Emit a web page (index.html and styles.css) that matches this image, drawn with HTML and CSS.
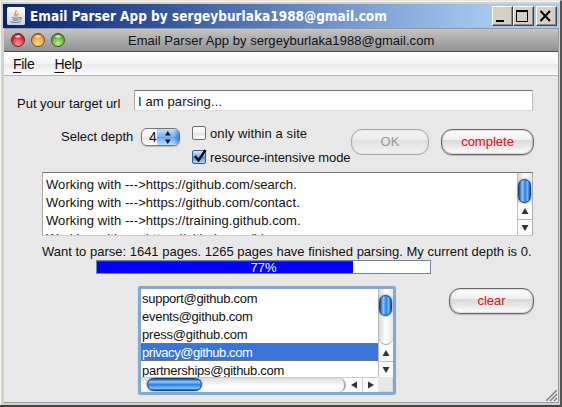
FILE: index.html
```html
<!DOCTYPE html>
<html lang="en">
<head>
<meta charset="utf-8">
<title>Email Parser App</title>
<link rel="stylesheet" href="styles.css">
</head>
<body>
<div class="window">
  <header class="titlebar">
    <svg class="java" viewBox="0 0 18 18" width="18" height="18">
      <defs><linearGradient id="jbg" x1="0" y1="0" x2="0" y2="1"><stop offset="0" stop-color="#fff"/><stop offset="1" stop-color="#cfcfd2"/></linearGradient></defs>
      <rect width="18" height="18" rx="1.5" fill="url(#jbg)"/>
      <path d="M8.6 9.6C5.8 7.4 10.2 6 8.8 3.2M10.3 9.4c-1.6-1.3.3-2 1-3" fill="none" stroke="#ec8a2c" stroke-width="1.3"/>
      <path d="M5 10.600c2.300.8 5.200.8 7.400 0M5.800 12.700c1.900.6 4 .6 5.700 0M3.800 14.800c3 1.100 8.200.9 10-.4M12.700 10.600c2.100-.5 2.300 1.500-.3 2.200" fill="none" stroke="#5d7d9c" stroke-width="1.100"/>
    </svg>
    <span class="caption">Email Parser App by sergeyburlaka1988@gmail.com</span>
    <div class="controls">
      <span class="ctl"><svg viewBox="0 0 20 20" width="20" height="20"><path d="M4 15h8" stroke="#000" stroke-width="2"/></svg></span>
      <span class="ctl"><svg viewBox="0 0 20 20" width="20" height="20"><path d="M3.500 5v10.500h11V5" fill="none" stroke="#000"/><path d="M3 5h12" stroke="#000" stroke-width="2"/></svg></span>
      <span class="ctl close"><svg viewBox="0 0 20 20" width="20" height="20"><path d="M4.500 5l9.500 10M14 5L4.500 15" stroke="#000" stroke-width="2"/></svg></span>
    </div>
  </header>
  <main class="frame">
    <div class="macbar">
      <i class="light red"></i><i class="light amber"></i><i class="light green"></i>
      <span class="mactitle">Email Parser App by sergeyburlaka1988@gmail.com</span>
    </div>
    <nav class="menu"><span class="file"><u>F</u>ile</span><span class="help"><u>H</u>elp</span></nav>
    <section class="url-row">
      <label>Put your target url</label>
      <div class="field">I am parsing...</div>
    </section>
    <section class="options">
      <span class="depth">Select depth</span>
      <div class="spinner"><b>4</b><i><svg viewBox="0 0 22 17" width="22" height="17"><path d="M8 6.500L10.800 2l2.800 4.500zM8 10.500h5.600L10.800 15z" fill="#061226"/></svg></i></div>
      <div class="checks">
        <div class="check"><i class="box"></i><span class="site">only within a site</span></div>
        <div class="check"><i class="box on"><svg viewBox="0 0 16 16" width="16" height="16"><path d="M3 7l3.500 4.500L13.500 1" fill="none" stroke="#000" stroke-width="2.300"/></svg></i><span class="mode">resource-intensive mode</span></div>
      </div>
      <div class="button ok">OK</div>
      <div class="button complete">complete</div>
    </section>
    <section class="log">
      <div class="lines">
        <p class="l1">Working with ---&gt;https://github.com/search.</p>
        <p class="l2">Working with ---&gt;https://github.com/contact.</p>
        <p class="l3">Working with ---&gt;https://training.github.com.</p>
        <p class="l4">Working with ---&gt;https://github.com/blog.</p>
      </div>
      <div class="vscroll"><div class="track"><i class="thumb"></i></div><b class="arrow"><svg viewBox="0 0 14 16" width="14" height="16"><path d="M3.500 11L7 5l3.500 6z" fill="#333"/></svg></b><b class="arrow line"><svg viewBox="0 0 14 16" width="14" height="16"><path d="M3.500 5L7 11l3.500-6z" fill="#333"/></svg></b></div>
    </section>
    <p class="status">Want to parse: 1641 pages. 1265 pages have finished parsing. My current depth is 0.</p>
    <div class="progress"><div class="fill"></div><span>77%</span></div>
    <section class="bottom">
      <div class="list">
        <ul>
          <li class="r1">support@github.com</li>
          <li class="r2">events@github.com</li>
          <li class="r3">press@github.com</li>
          <li class="r4 selected">privacy@github.com</li>
          <li class="r5">partnerships@github.com</li>
        </ul>
        <div class="vscroll"><div class="track cap"><i class="thumb"></i></div><b class="arrow"><svg viewBox="0 0 14 16" width="14" height="16"><path d="M3.500 11L7 5l3.500 6z" fill="#333"/></svg></b><b class="arrow line"><svg viewBox="0 0 14 16" width="14" height="16"><path d="M3.500 5L7 11l3.500-6z" fill="#333"/></svg></b></div>
        <div class="hscroll"><div class="htrack"><i class="hthumb"></i></div><b><svg viewBox="0 0 16 14" width="16" height="14"><path d="M11 3.500L5 7l6 3.500z" fill="#333"/></svg></b><b class="sep"><svg viewBox="0 0 16 14" width="16" height="14"><path d="M5 3.500L11 7l-6 3.500z" fill="#333"/></svg></b></div>
      </div>
      <div class="button clear">clear</div>
    </section>
    <svg class="grip" viewBox="0 0 11 11" width="11" height="11"><path d="M0 11L11 0M4 11l7-7M8 11l3-3" stroke="#777" stroke-width="1.300"/></svg>
  </main>
</div>
</body>
</html>
```
FILE: styles.css
```css
* { box-sizing: border-box; }
body { margin: 0; width: 562px; height: 407px; overflow: hidden; background: #d5d2cb; font: 13px/18px "Liberation Sans", Arial, sans-serif; color: #111; }
p, ul { margin: 0; padding: 0; list-style: none; }
svg { display: block; }
i, b { font-style: normal; font-weight: normal; display: block; }
span, p, li, label { white-space: nowrap; }
.window { height: 407px; padding: 3px 1px 0 3px; border: solid; border-width: 1px 2px 2px 0; border-color: #e8e6e0 #555 #444 #ddd; box-shadow: inset 1px 1px #f4f3ef; }
.titlebar { display: flex; align-items: center; height: 24px; padding: 0 2px 0 4px; background: linear-gradient(90deg, #0a246a, #2e4f96 25%, #7395cc 60%, #a6caf0 88%); }
.caption { margin-left: 5px; color: #fff; font: bold 13.5px/20px "DejaVu Sans Condensed", "DejaVu Sans", sans-serif; }
.controls { display: flex; margin-left: auto; }
.ctl { width: 21px; height: 20px; background: #d4d0c8; border: 1px solid; border-color: #fff #404040 #404040 #fff; box-shadow: inset -1px -1px #929089; }
.ctl svg { margin: -1px; }
.close { margin-left: 2px; }
.frame { position: relative; height: 375px; border: solid #999; border-width: 1px 1px 1px 0; background: #e8e8e8; margin-left: 1px; }
.macbar { display: flex; align-items: center; height: 23px; padding-left: 7px; gap: 6px; background: linear-gradient(#c4c4c4, #929292); border-bottom: 1px solid #4c4c4c; }
.light { width: 14px; height: 14px; border-radius: 50%; border: 1px solid; }
.red { background: radial-gradient(ellipse 4px 2px at 50% 20%, #fff, transparent), radial-gradient(circle at 50% 80%, #ff9a94, #dc2634 60%, #8d1019); border-color: #6d2024; }
.amber { background: radial-gradient(ellipse 4px 2px at 50% 20%, #fff, transparent), radial-gradient(circle at 50% 80%, #ffe78a, #eb9b3b 60%, #9a5314); border-color: #7b4a20; }
.green { background: radial-gradient(ellipse 4px 2px at 50% 20%, #fff, transparent), radial-gradient(circle at 50% 80%, #c5f08a, #65ad35 60%, #2e6515); border-color: #315c20; }
.mactitle { margin: 2px 0 0 57px; letter-spacing: .04px; }
.menu { display: flex; height: 24px; padding: 3px 0 0 9px; font-size: 14px; letter-spacing: -.3px; background: linear-gradient(#fff, #f4f4f4 50%, #e9e9e9 52%, #fafafa); border-bottom: 1px solid #b4b4b4; }
.menu u { text-underline-offset: 3px; text-decoration-thickness: 1px; text-decoration-skip-ink: none; }
.help { margin-left: 20px; }
.url-row { display: flex; margin: 14px 0 0 13px; height: 21px; }
.url-row label { width: 117px; padding-top: 5px; }
.field { width: 399px; height: 21px; background: #fff; border: 1px solid; border-color: #777 #bbb #ddd #aaa; padding: 2px 3px; letter-spacing: .12px; }
.options { display: flex; margin: 15px 0 0 57px; height: 46px; align-items: flex-start; }
.depth { width: 80px; padding-top: 2px; }
.spinner { display: flex; width: 39px; height: 18px; margin-top: 2px; border: 1px solid #71777f; border-radius: 6px; background: linear-gradient(#fff, #f5f5f5 50%, #e5e5e5 52%, #fff); overflow: hidden; box-shadow: 0 1px 1px #bbb; }
.spinner b { width: 15px; padding-left: 7px; line-height: 17px; font-size: 14px; }
.spinner i { width: 22px; margin-left: auto; background: linear-gradient(90deg, transparent 75%, #2868c0aa), linear-gradient(#c4ddf7, #7bb2f0 50%, #65a6ec 52%, #b9e2ff); }
.checks { width: 159px; margin-left: 12px; }
.check { display: flex; height: 24px; }
.box { width: 14px; height: 14px; border: 1px solid #707070; border-radius: 2px; background: linear-gradient(#fff, #f1f1f1 50%, #e2e2e2 52%, #fff); }
.box svg { margin: -2px 0 0 -1px; }
.on { background: linear-gradient(#dcebfa, #68a6ea 50%, #4a94e4 52%, #a7dcff); border-color: #3e5a8a; }
.check span { margin-left: 4px; margin-top: -1px; }
.site { letter-spacing: .1px; }
.mode { letter-spacing: -.08px; }
.button { height: 26px; text-align: center; line-height: 24px; border: 1px solid #666; border-radius: 11px; background: linear-gradient(#fff, #efefef 40%, #d9d9d9 42%, #e8e8e8 70%, #fff); color: #d9141e; box-shadow: inset 0 0 2px #888, 0 1px 1px #bbb; }
.ok { width: 78px; margin-top: 3px; color: #989898; border-color: #aaa; background: linear-gradient(#f4f4f4, #ececec 40%, #e0e0e0 42%, #f2f2f2); box-shadow: inset 0 0 2px #ccc; }
.complete { width: 93px; margin: 3px 0 0 12px; }
.log { display: flex; width: 491px; height: 64px; margin: 0 0 0 38px; background: #fff; border: 1px solid; border-color: #777 #aaa #ccc #aaa; overflow: hidden; }
.lines { flex: 1; padding: 3px 0 0 3px; height: 62px; overflow: hidden; letter-spacing: .085px; }
.vscroll { width: 15px; display: flex; flex-direction: column; border-left: 1px solid #bbb; background: #fafafa; }
.track { flex: 1; background: linear-gradient(90deg, #d8d8d8, #fff 45%, #e8e8e8); }
.thumb { width: 13px; height: 24px; margin-top: 6px; border-radius: 7px; border: 1px solid #1c4070; background: linear-gradient(90deg, #164e9e, #8cc8fa 30%, #4795e8 48%, #2e7edc 55%, #65baff 78%, #1c509c); box-shadow: 0 0 2px #456; }
.arrow { height: 16px; }
.line { border-top: 1px solid #bbb; }
.status { margin: 7px 0 0 38px; height: 17px; }
.progress { position: relative; width: 335px; height: 14px; margin: 0 0 0 92px; background: #fff; border: 1px solid #6f87a3; }
.fill { width: 256px; height: 12px; background: #00f; border-top: 1px solid #1c2fc5; }
.progress span { position: absolute; inset: 0; text-align: center; line-height: 13px; color: #fff; }
.bottom { display: flex; margin: 12px 0 0 134px; align-items: flex-start; }
.list { display: grid; grid-template: 88px 15px / 237px 15px; width: 258px; height: 109px; border: 3px solid #86addb; border-color: #82a9d2; border-radius: 3px; box-shadow: inset 0 0 1px #555, 0 0 1px #9bc; background: #e8e8e8; }
.list ul { background: #fff; overflow: hidden; }
.list li { height: 18px; padding-left: 1px; line-height: 20px; letter-spacing: -.27px; }
.list .r3 { letter-spacing: -.2px; }
.list .selected { background: #3875d7; color: #fff; border: solid #79736f; border-width: 1px 0; line-height: 18px; letter-spacing: -.42px; }
.list .thumb { height: 21px; }
.cap { border-radius: 0 0 8px 8px; border-bottom: 1px solid #aaa; }
.hscroll { display: flex; background: #fafafa; border-top: 1px solid #ccc; }
.htrack { width: 205px; background: linear-gradient(#ddd, #fff 60%, #f4f4f4); border-radius: 0 8px 8px 0; border-right: 2px solid #aaa; }
.hscroll b { width: 16px; }
.hscroll .sep { border-left: 1px solid #ccc; }
.hthumb { width: 55px; height: 13px; margin-left: 6px; border: 1px solid #1c4070; border-radius: 7px; background: linear-gradient(#174f9e, #93c8fa 25%, #4394e6 45%, #2f7fdc 52%, #74c7ff 85%, #1c509c); box-shadow: 0 0 2px #456; }
.clear { width: 85px; margin: 2px 0 0 53px; }
.grip { position: absolute; right: 1px; bottom: 1px; }
```
